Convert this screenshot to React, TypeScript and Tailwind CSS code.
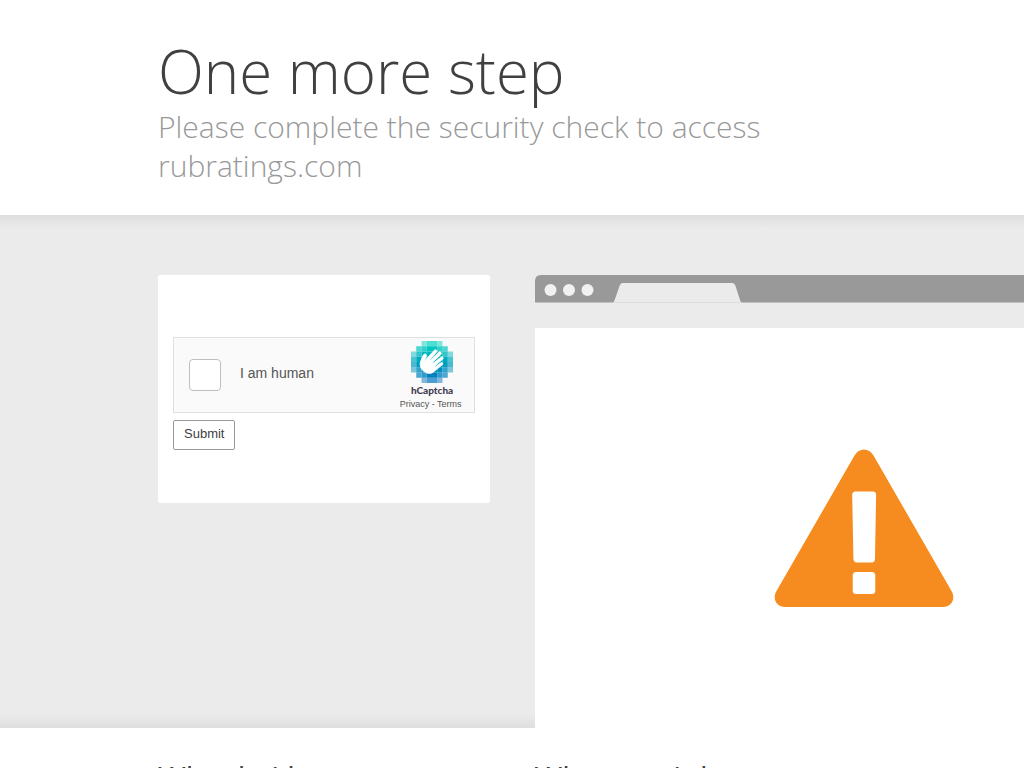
const rows = [
  { y: 0, fill: "#00D4BF", cells: [0, 0, 0.5, 0.7, 0.7, 0.5, 0, 0] },
  { y: 4, fill: "#00C6BF", cells: [0, 0.7, 0.8, 1, 1, 0.8, 0.7, 0] },
  { y: 8, fill: "#00B9BF", cells: [0.5, 0.8, 1, 1, 1, 1, 0.8, 0.5] },
  { y: 12, fill: "#00ABBF", cells: [0.7, 1, 1, 1, 1, 1, 1, 0.7] },
  { y: 16, fill: "#009DBF", cells: [0.7, 1, 1, 1, 1, 1, 1, 0.7] },
  { y: 20, fill: "#008FBF", cells: [0.5, 0.8, 1, 1, 1, 1, 0.8, 0.5] },
  { y: 24, fill: "#0082BF", cells: [0, 0.7, 0.8, 1, 1, 0.8, 0.7, 0] },
  { y: 28, fill: "#0074BF", cells: [0, 0, 0.5, 0.7, 0.7, 0.5, 0, 0] },
];

function CaptchaLogo() {
  return (
    <svg viewBox="0 0 32 32" className="size-[42px]" aria-hidden="true">
      {rows.map((row) =>
        row.cells.map((opacity, i) =>
          opacity > 0 ? (
            <rect key={`${row.y}-${i}`} x={i * 4} y={row.y} width="4" height="4" fill={row.fill} opacity={opacity} />
          ) : null,
        ),
      )}
      <path
        fill="#fff"
        stroke="#fff"
        strokeWidth="0.6"
        transform="translate(1.8 -0.2)"
        d="M8.63 14.82L9.74 12.33C10.15 11.69 10.1 10.91 9.66 10.47C9.3 10.16 8.85 10.06 8.44 10.21C8.07 10.32 7.76 10.57 7.55 10.89C7.55 10.89 6.02 14.45 5.45 16.05C4.88 17.64 5.11 20.57 7.29 22.76C9.61 25.07 12.95 25.6 15.09 24C15.18 23.95 15.26 23.9 15.34 23.84L21.93 18.34C22.25 18.07 22.72 17.53 22.29 16.91C21.88 16.3 21.1 16.71 20.78 16.92L16.98 19.68C16.82 19.8 16.61 19.78 16.47 19.6C16.38 19.48 16.36 19.17 16.5 19.06L22.32 14.12C22.82 13.67 22.89 13.01 22.48 12.56C22.08 12.12 21.45 12.13 20.94 12.59L15.71 16.68C15.5 16.85 15.2 16.81 15.04 16.6C14.93 16.49 14.9 16.31 15.01 16.2L20.93 10.45C21.38 10.03 21.42 9.3 20.99 8.82C20.57 8.37 19.84 8.35 19.38 8.78L13.33 14.46C13.19 14.6 12.92 14.46 12.88 14.29C12.86 14.22 12.88 14.15 12.92 14.11L17.55 8.84C18 8.42 18.04 7.7 17.62 7.23C17.2 6.77 16.48 6.75 16.02 7.17L9 14.94C8.86 15.08 8.65 15.08 8.63 14.82Z"
      />
    </svg>
  );
}

function CaptchaWidget() {
  return (
    <div className="flex h-[76px] items-center border border-[#e0e0e0] bg-[#fafafa] pl-[15px] pr-3 font-['Liberation_Sans',sans-serif] text-[#555]">
      <input
        id="human"
        type="checkbox"
        className="size-8 shrink-0 appearance-none rounded-[4px] border border-[#bfbfbf] bg-white checked:bg-[#00838f]"
      />
      <label htmlFor="human" className="flex-1 pb-1 pl-[19px] text-sm leading-4">
        I am human
      </label>
      <div className="flex flex-col items-center">
        <div className="flex flex-col items-center pl-[3px]">
          <CaptchaLogo />
          <span className="mt-[2px] font-['Lato',sans-serif] text-[10px] leading-[10px] font-black text-[#433f53]">
            hCaptcha
          </span>
        </div>
        <div className="mt-1 text-[9px] leading-[10px]">
          <a href="#privacy">Privacy</a> - <a href="#terms">Terms</a>
        </div>
      </div>
    </div>
  );
}

function BrowserWindow() {
  return (
    <div className="w-[658px]">
      <svg viewBox="0 0 658 28" className="block h-7 w-full" aria-hidden="true">
        <path d="M0 28V6Q0 0 6 0H652Q658 0 658 6V28Z" fill="#999" />
        <path d="M0 27.5H658" stroke="#c2c2c2" />
        <path d="M78 28Q79 27 80 24L84.500 11Q85.500 8 88 8H197Q199.500 8 200.500 11L205 25Q205.500 27 207 28Z" fill="#ebebeb" />
        <path d="M79 27.500H206" stroke="#dedede" />
        <circle cx="15.500" cy="15" r="6" fill="#f1f1f1" />
        <circle cx="34" cy="15" r="6" fill="#f1f1f1" />
        <circle cx="52.500" cy="15" r="6" fill="#f1f1f1" />
      </svg>
      <div className="h-[25px] bg-[#ebebeb]" />
      <div className="flex h-[400px] justify-center bg-white pt-[121px]">
        <svg viewBox="0 0 180 159" className="h-[159px] w-[180px]" role="img" aria-label="Warning">
          <path
            d="M80.500 6.500C85 -1.500 95 -1.500 99.500 6.500L177.500 142C182 150 177.500 158 169 158H11C2.500 158 -2 150 2.500 142Z"
            fill="#f68b1f"
          />
          <path
            d="M81.500 42.500H98.500Q102.200 42.500 102.100 46L101 109.500Q101 113.500 97.500 113.500H83Q79.500 113.500 79.400 109.500L78.200 46Q78.200 42.500 81.500 42.500Z"
            fill="#fff"
          />
          <rect x="78.700" y="123" width="22.600" height="22" rx="3.500" fill="#fff" />
        </svg>
      </div>
    </div>
  );
}

export default function App() {
  return (
    <div className="min-h-screen overflow-x-hidden bg-white font-['Open_Sans',sans-serif] font-light text-[#404040]">
      <header className="mx-auto max-w-[708px] pt-[35px] pb-[30px]">
        <h1 className="text-[60px] leading-[72px] font-light">One more step</h1>
        <h2 className="text-[30px] leading-[39px] font-light text-[#999]">
          Please complete the security check to access rubratings.com
        </h2>
      </header>

      <main>
        <section className="bg-[#ebebeb] bg-[linear-gradient(to_bottom,#dedede,#ebebeb_14px,#ebebeb_calc(100%-14px),#dedede)] pt-[60px]">
          <div className="mx-auto grid max-w-[708px] grid-cols-2 items-start gap-[45px]">
            <form
              className="rounded-[2px] bg-white px-[15px] pt-[62px] pb-[53px]"
              onSubmit={(event) => event.preventDefault()}
            >
              <CaptchaWidget />
              <button
                type="submit"
                className="mt-[7px] block h-[30px] rounded-[2px] border border-[#999] bg-white px-[10px] pb-[2px] font-['Liberation_Sans',sans-serif] text-[13px] leading-4 font-normal text-[#404040]"
              >
                Submit
              </button>
            </form>
            <BrowserWindow />
          </div>
        </section>

        <section className="mx-auto grid max-w-[708px] grid-cols-2 gap-[45px] pt-[29px] pb-10">
          <h2 className="text-[30px] leading-[39px] font-normal">Why do I have to complete a CAPTCHA?</h2>
          <h2 className="text-[30px] leading-[39px] font-normal">What can I do to prevent this in the future?</h2>
        </section>
      </main>
    </div>
  );
}
